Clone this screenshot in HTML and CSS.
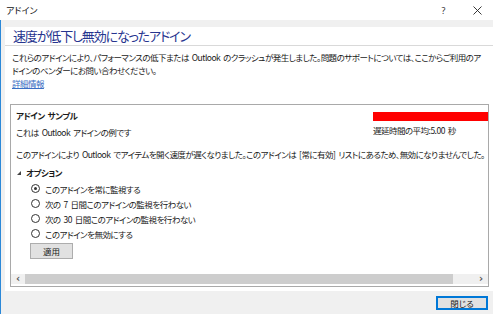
FILE: index.html
```html
<!DOCTYPE html>
<html lang="ja">
<head>
<meta charset="utf-8">
<link rel="stylesheet" href="styles.css">
</head>
<body>
<div class="window">
  <div class="titlebar">
    <span class="win-title">アドイン</span>
    <span class="win-help">?</span>
    <span class="win-close"><svg width="9" height="9" viewBox="0 0 9 9"><path d="M0.5 0.5L8.5 8.5M8.5 0.5L0.5 8.5" stroke="#222" stroke-width="0.9" fill="none"/></svg></span>
  </div>
  <div class="main">
    <div class="panel">
      <div class="heading">速度が低下し無効になったアドイン</div>
      <div class="content">
        <div class="desc">
          <div class="line">これらのアドインにより、パフォーマンスの低下または Outlook のクラッシュが発生しました。問題のサポートについては、ここからご利用のア</div>
          <div class="line">ドインのベンダーにお問い合わせください。</div>
          <div class="line"><a class="link" href="#">詳細情報</a></div>
        </div>
        <div class="list">
          <div class="list-body">
            <div class="item-head">
              <div class="item-left">
                <div class="item-name">アドイン サンプル</div>
                <div class="item-sub">これは Outlook アドインの例です</div>
              </div>
              <div class="item-right">
                <div class="bar"></div>
                <div class="latency">遅延時間の平均:5.00 秒</div>
              </div>
            </div>
            <div class="note">このアドインにより Outlook でアイテムを開く速度が遅くなりました。このアドインは [常に有効] リストにあるため、無効になりませんでした。</div>
            <div class="opt-head"><span class="tri"></span><span>オプション</span></div>
            <div class="radios">
              <div class="radio-row"><span class="radio checked"></span><span>このアドインを常に監視する</span></div>
              <div class="radio-row"><span class="radio"></span><span>次の 7 日間このアドインの監視を行わない</span></div>
              <div class="radio-row"><span class="radio"></span><span>次の 30 日間このアドインの監視を行わない</span></div>
              <div class="radio-row"><span class="radio"></span><span>このアドインを無効にする</span></div>
            </div>
            <button class="apply">適用</button>
          </div>
          <div class="hscroll">
            <span class="sb-arrow">&lsaquo;</span>
            <span class="sb-thumb"></span>
            <span class="sb-track"></span>
            <span class="sb-arrow">&rsaquo;</span>
          </div>
        </div>
      </div>
    </div>
    <div class="footer">
      <button class="close-btn">閉じる</button>
    </div>
  </div>
</div>
</body>
</html>
```
FILE: styles.css
```css
html, body {
  margin: 0;
  padding: 0;
}
body {
  width: 493px;
  height: 314px;
  overflow: hidden;
  background: #ffffff;
  font-family: "Noto Sans CJK JP", "Noto Sans", sans-serif;
  font-feature-settings: "palt";
  font-size: 8.5px;
  letter-spacing: -0.52px;
  word-spacing: 1.5px;
  color: #1a1a1a;
}
.window {
  display: flex;
  flex-direction: column;
  height: 314px;
}
.titlebar {
  height: 20px;
  display: flex;
  align-items: center;
  background: #ffffff;
}
.win-title {
  margin-left: 6px;
  font-size: 9px;
  letter-spacing: 0;
  color: #111;
}
.win-help {
  margin-left: auto;
  margin-right: 28px;
  font-family: "Noto Sans", sans-serif;
  font-size: 9px;
  color: #333;
}
.win-close {
  margin-right: 11px;
  display: flex;
  align-items: center;
}
.main {
  flex: 1;
  background: #f0f0f0;
  border-left: 1px solid #2b88d8;
  display: flex;
  flex-direction: column;
  padding: 7px 0 0 4px;
  min-height: 0;
}
.panel {
  background: #ffffff;
  width: 489px;
  height: 264px;
  display: flex;
  flex-direction: column;
}
.heading {
  height: 18px;
  line-height: 18px;
  padding-left: 8px;
  font-size: 13px;
  letter-spacing: -1.15px;
  color: #27358f;
  border-bottom: 1px solid #d9d9d9;
  white-space: nowrap;
}
.content {
  flex: 1;
  display: flex;
  flex-direction: column;
  padding: 5px 5px 4px 5px;
  min-height: 0;
}
.desc {
  padding-left: 2px;
}
.line {
  height: 13px;
  line-height: 13px;
  white-space: nowrap;
}
.link {
  color: #3a6fc4;
  text-decoration: underline;
}
.list {
  margin-top: 14px;
  flex: 1;
  border: 1px solid #a9a9a9;
  display: flex;
  flex-direction: column;
  min-height: 0;
}
.list-body {
  flex: 1;
  padding: 4px 0 0 5px;
}
.item-head {
  display: flex;
}
.item-left {
  flex: 1;
}
.item-name {
  line-height: 13px;
  font-weight: bold;
}
.item-sub {
  margin-top: 4px;
  line-height: 13px;
}
.item-right {
  width: 115px;
}
.bar {
  margin-top: 3px;
  height: 9px;
  background: #ff0000;
}
.latency {
  margin-top: 3px;
  line-height: 13px;
}
.note {
  margin-top: 9px;
  line-height: 13px;
  white-space: nowrap;
}
.opt-head {
  margin-top: 5px;
  line-height: 13px;
  font-weight: bold;
  display: flex;
  align-items: center;
}
.tri {
  width: 0;
  height: 0;
  margin-left: 1px;
  margin-right: 5px;
  border-left: 4px solid transparent;
  border-bottom: 4px solid #444;
}
.radios {
  margin-top: 2px;
}
.radio-row {
  height: 15px;
  display: flex;
  align-items: center;
  padding-left: 15px;
}
.radio {
  width: 7px;
  height: 7px;
  border: 1px solid #333;
  border-radius: 50%;
  margin-right: 5px;
  position: relative;
  box-sizing: content-box;
}
.radio.checked::after {
  content: "";
  position: absolute;
  left: 2px;
  top: 2px;
  width: 3px;
  height: 3px;
  border-radius: 50%;
  background: #333;
}
.apply {
  margin: 2px 0 0 14px;
  width: 43px;
  height: 16px;
  padding: 0;
  font-family: inherit;
  font-feature-settings: "palt";
  font-size: 8.5px;
  letter-spacing: 0;
  color: #1a1a1a;
  background: #e1e1e1;
  border: 1px solid #adadad;
  display: block;
}
.hscroll {
  height: 10px;
  margin-bottom: 2px;
  display: flex;
  align-items: stretch;
}
.sb-arrow {
  width: 14px;
  background: #f0f0f0;
  font-family: "DejaVu Sans", sans-serif;
  font-size: 10px;
  line-height: 9px;
  letter-spacing: 0;
  text-align: center;
  color: #555;
  font-weight: bold;
}
.sb-thumb {
  width: 428px;
  background: #cdcdcd;
}
.sb-track {
  flex: 1;
  background: #f0f0f0;
}
.footer {
  flex: 1;
  display: flex;
  justify-content: flex-end;
  align-items: flex-start;
  padding: 5px 5px 0 0;
}
.close-btn {
  width: 52px;
  height: 14px;
  padding: 0;
  font-family: inherit;
  font-feature-settings: "palt";
  font-size: 8.5px;
  letter-spacing: 0;
  line-height: 10px;
  color: #1a1a1a;
  background: #e1e1e1;
  border: 2px solid #0078d7;
  box-sizing: border-box;
}
```
